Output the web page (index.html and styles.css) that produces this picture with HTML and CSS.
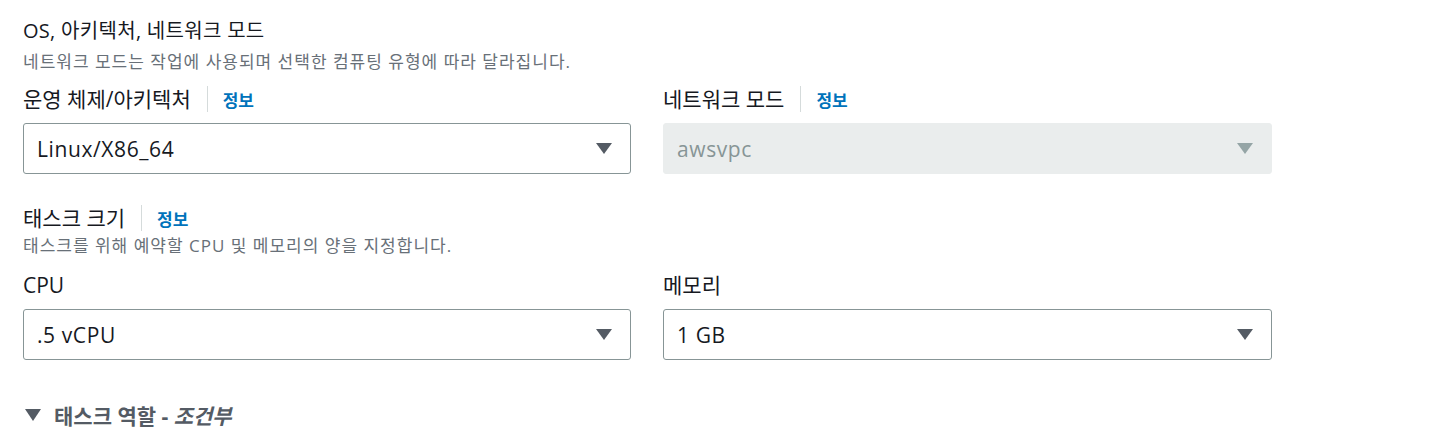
FILE: index.html
```html
<!DOCTYPE html>
<html lang="ko">
<head>
    <meta charset="UTF-8">
    <meta name="viewport" content="width=device-width, initial-scale=1.0">
    <title>태스크 정의</title>
    <link rel="stylesheet" href="styles.css">
</head>
<body>
    <div class="page">
        <!-- OS, 아키텍처, 네트워크 모드 -->
        <div class="section">
            <h2 class="section-title">OS, 아키텍처, 네트워크 모드</h2>
            <p class="desc">네트워크 모드는 작업에 사용되며 선택한 컴퓨팅 유형에 따라 달라집니다.</p>
            <div class="row">
                <div class="field">
                    <div class="label-row">
                        <span class="label">운영 체제/아키텍처</span>
                        <span class="divider"></span>
                        <a class="info" href="javascript:;">정보</a>
                    </div>
                    <div class="select">
                        <span class="select-text">Linux/X86_64</span>
                        <svg class="caret" width="16" height="11" viewBox="0 0 16 11"><polygon points="0,0 16,0 8,11"/></svg>
                    </div>
                </div>
                <div class="field">
                    <div class="label-row">
                        <span class="label">네트워크 모드</span>
                        <span class="divider"></span>
                        <a class="info" href="javascript:;">정보</a>
                    </div>
                    <div class="select disabled">
                        <span class="select-text">awsvpc</span>
                        <svg class="caret" width="16" height="11" viewBox="0 0 16 11"><polygon points="0,0 16,0 8,11"/></svg>
                    </div>
                </div>
            </div>
        </div>

        <!-- 태스크 크기 -->
        <div class="section size">
            <div class="label-row">
                <span class="label">태스크 크기</span>
                <span class="divider"></span>
                <a class="info" href="javascript:;">정보</a>
            </div>
            <p class="desc desc-tight">태스크를 위해 예약할 CPU 및 메모리의 양을 지정합니다.</p>
            <div class="row">
                <div class="field">
                    <div class="label-row">
                        <span class="label">CPU</span>
                    </div>
                    <div class="select">
                        <span class="select-text">.5 vCPU</span>
                        <svg class="caret" width="16" height="11" viewBox="0 0 16 11"><polygon points="0,0 16,0 8,11"/></svg>
                    </div>
                </div>
                <div class="field">
                    <div class="label-row">
                        <span class="label">메모리</span>
                    </div>
                    <div class="select">
                        <span class="select-text">1 GB</span>
                        <svg class="caret" width="16" height="11" viewBox="0 0 16 11"><polygon points="0,0 16,0 8,11"/></svg>
                    </div>
                </div>
            </div>
        </div>

        <!-- 접힌 섹션 -->
        <div class="expand">
            <svg class="expand-icon" width="16" height="12" viewBox="0 0 16 12"><polygon points="0,0 16,0 8,12"/></svg>
            <span>태스크 역할 - <em>조건부</em></span>
        </div>
    </div>
</body>
</html>
```

FILE: styles.css
```css
* {
    margin: 0;
    padding: 0;
    box-sizing: border-box;
}

body {
    font-family: "Open Sans", "Noto Sans CJK KR", sans-serif;
    color: #16191f;
    background-color: #ffffff;
}

.page {
    padding: 17px 23px 0;
}

.section-title {
    font-size: 20px;
    font-weight: 400;
    line-height: 28px;
    letter-spacing: 0.3px;
}

.desc {
    font-size: 17px;
    line-height: 22px;
    letter-spacing: 1px;
    color: #687078;
    margin-top: 6px;
}

.desc-tight {
    margin-top: 4px;
}

/* 두 칸짜리 행 */
.row {
    display: grid;
    grid-template-columns: 608px 609px;
    column-gap: 32px;
    margin-top: 13px;
}

.label-row {
    display: flex;
    align-items: center;
    height: 26px;
}

.label {
    font-size: 21px;
    line-height: 26px;
}

.divider {
    width: 1px;
    height: 26px;
    background-color: #d5dbdb;
    margin: 0 15px 0 16px;
}

.info {
    font-size: 17px;
    font-weight: 700;
    color: #0073bb;
    text-decoration: none;
}

.select {
    display: flex;
    align-items: center;
    justify-content: space-between;
    height: 51px;
    margin-top: 11px;
    padding: 0 18px 0 13px;
    border: 1px solid #879596;
    border-radius: 3px;
}

.select-text {
    font-size: 21px;
    letter-spacing: 0.6px;
}

.caret {
    fill: #545b64;
}

.select.disabled {
    background-color: #eaeded;
    border-color: #eaeded;
    color: #879596;
}

.select.disabled .caret {
    fill: #95a5a6;
}

.size {
    margin-top: 31px;
}

.size .row {
    margin-top: 15px;
}

.expand {
    display: flex;
    align-items: center;
    margin-top: 40px;
    font-size: 21px;
    font-weight: 700;
    color: #545b64;
}

.expand-icon {
    fill: #545b64;
    margin: 0 13px 0 2px;
}

.expand em {
    font-style: italic;
}
```
